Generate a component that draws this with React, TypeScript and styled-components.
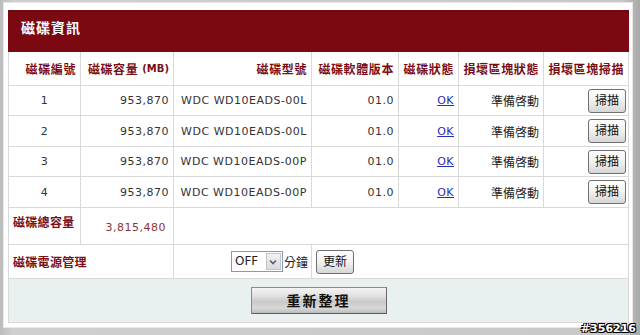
import React from "react";
import styled, { createGlobalStyle } from "styled-components";

const Global = createGlobalStyle`
  html, body { margin: 0; padding: 0; }
  body {
    width: 640px; height: 335px; overflow: hidden;
    background: linear-gradient(180deg, #d2d2d2 0%, #c2c2c2 60%, #b4b4b4 100%);
    font-family: "DejaVu Sans", "Noto Sans CJK TC", sans-serif;
  }
`;

const Frame = styled.div`
  position: relative;
  width: 640px;
  height: 335px;
  box-sizing: border-box;
  padding: 3px 8px 8px 4px;
  background: linear-gradient(90deg, #bcbcbc 0%, #cfcfcf 2%, #c8c8c8 97%, #a9a9a9 100%);
`;

const Panel = styled.div`
  background: #fff;
  padding: 7px 3px 4px 4px;
  box-shadow: 0 0 0 1px #e8e8e8;
`;

const TitleBar = styled.div`
  height: 42px;
  box-sizing: border-box;
  background: linear-gradient(180deg, #6e0610 0%, #7c0912 8%, #7c0912 100%);
  color: #fff;
  font-family: "Noto Sans CJK TC", sans-serif;
  font-weight: 700;
  font-size: 14px;
  letter-spacing: 1px;
  padding: 7px 0 0 13px;
`;

const Grid = styled.div`
  display: grid;
  grid-template-columns: 71px 92px 137px 86px 59px 84px 84px;
  grid-template-rows: 33px 29px 30px 29px 30px 36px 33px 43px;
  gap: 1px;
  background: #d9d9d9;
  border: 1px solid #d9d9d9;
  border-top: none;
`;

const Cell = styled.div<{ $align?: string; $span?: number; $valign?: string }>`
  background: #fff;
  display: flex;
  align-items: ${(p) => p.$valign || "center"};
  justify-content: ${(p) => p.$align || "flex-end"};
  padding: 0 4px;
  grid-column: span ${(p) => p.$span || 1};
  font-size: 11px;
  letter-spacing: 0.5px;
  color: #333;
  white-space: nowrap;
`;

const HeadCell = styled(Cell)`
  font-family: "Noto Sans CJK TC", sans-serif;
  font-weight: 700;
  font-size: 12px;
  letter-spacing: 0.6px;
  color: #7a0d15;
`;

const Unit = styled.span`
  font-family: "DejaVu Sans", sans-serif;
  font-size: 10px;
  letter-spacing: 0;
  margin-left: 4px;
`;

const Label = styled(Cell)`
  font-family: "Noto Sans CJK TC", sans-serif;
  font-weight: 700;
  font-size: 12px;
  letter-spacing: 0.3px;
  color: #7a0d15;
`;

const TotalValue = styled(Cell)`
  color: #8e3434;
  padding-right: 7px;
  padding-top: 2px;
`;

const CJK = styled.span`
  font-family: "Noto Sans CJK TC", sans-serif;
  font-size: 12px;
  letter-spacing: 0;
  color: #222;
`;

const Link = styled.a`
  color: #2a2ab8;
  text-decoration: underline;
  font-size: 11px;
  cursor: pointer;
`;

const SmallButton = styled.button`
  width: 38px;
  height: 24px;
  padding: 0 0 3px;
  border: 1px solid #6f6f6f;
  border-radius: 3px;
  background: linear-gradient(180deg, #ffffff 0%, #f1f1f1 50%, #d6d6d6 100%);
  font-family: "Noto Sans CJK TC", sans-serif;
  font-size: 12px;
  letter-spacing: 0;
  color: #111;
  margin-right: -2px;
`;

const SelectWrap = styled.div`
  display: flex;
  align-items: center;
  gap: 1px;
  margin-right: -1px;
`;

const SelectBox = styled.div`
  display: flex;
  height: 21px;
  border: 1px solid #7f9db9;
  background: #fff;
  box-sizing: border-box;
`;

const SelectText = styled.span`
  width: 30px;
  padding-left: 3px;
  font-size: 12px;
  letter-spacing: 0;
  color: #222;
  line-height: 19px;
`;

const SelectArrow = styled.span`
  width: 15px;
  margin: 1px;
  background: linear-gradient(180deg, #f4f4f4, #d8d8d8);
  display: flex;
  align-items: center;
  justify-content: center;
  box-shadow: inset 0 0 0 1px #c4c4c4;
`;

const Bottom = styled.div`
  grid-column: span 7;
  background: #e9f1f0;
  display: flex;
  justify-content: center;
  align-items: flex-start;
  padding-top: 8px;
`;

const BigButton = styled.button`
  width: 136px;
  height: 27px;
  border: 1px solid #8a8a8a;
  border-right-color: #6a6a6a;
  border-bottom-color: #5a5a5a;
  background: linear-gradient(180deg, #f4f4f4 0%, #e2e2e2 30%, #c9c9c9 55%, #d8d8d8 80%, #bdbdbd 100%);
  font-family: "Noto Sans CJK TC", sans-serif;
  font-weight: 700;
  font-size: 14px;
  letter-spacing: 2px;
  color: #111;
  padding: 0 0 2px;
`;

const Watermark = styled.div`
  position: absolute;
  right: 4px;
  bottom: 0;
  font-family: "DejaVu Sans", sans-serif;
  font-weight: 700;
  font-size: 11px;
  color: #fff;
  text-shadow: -1px -1px 0 #000, 1px -1px 0 #000, -1px 1px 0 #000, 1px 1px 0 #000;
`;

const rows = [
  { id: "1", model: "WDC WD10EADS-00L" },
  { id: "2", model: "WDC WD10EADS-00L" },
  { id: "3", model: "WDC WD10EADS-00P" },
  { id: "4", model: "WDC WD10EADS-00P" },
];

export default function App() {
  return (
    <>
      <Global />
      <Frame>
        <Panel>
          <TitleBar>磁碟資訊</TitleBar>
          <Grid>
            <HeadCell>磁碟編號</HeadCell>
            <HeadCell>
              磁碟容量<Unit>(MB)</Unit>
            </HeadCell>
            <HeadCell>磁碟型號</HeadCell>
            <HeadCell>磁碟軟體版本</HeadCell>
            <HeadCell>磁碟狀態</HeadCell>
            <HeadCell>損壞區塊狀態</HeadCell>
            <HeadCell>損壞區塊掃描</HeadCell>
            {rows.map((r) => (
              <React.Fragment key={r.id}>
                <Cell $align="center">{r.id}</Cell>
                <Cell>953,870</Cell>
                <Cell>{r.model}</Cell>
                <Cell>01.0</Cell>
                <Cell>
                  <Link>OK</Link>
                </Cell>
                <Cell>
                  <CJK>準備啓動</CJK>
                </Cell>
                <Cell>
                  <SmallButton>掃描</SmallButton>
                </Cell>
              </React.Fragment>
            ))}
            <Label $align="flex-start" $valign="flex-start" style={{ paddingTop: 5 }}>
              磁碟總容量
            </Label>
            <TotalValue>3,815,480</TotalValue>
            <Cell $span={5} />
            <Label $align="flex-start" $span={2}>
              磁碟電源管理
            </Label>
            <Cell>
              <SelectWrap>
                <SelectBox>
                  <SelectText>OFF</SelectText>
                  <SelectArrow>
                    <svg width="8" height="6" viewBox="0 0 8 6">
                      <path d="M1 1.5 L4 4.5 L7 1.5" fill="none" stroke="#4d6185" strokeWidth="1.6" />
                    </svg>
                  </SelectArrow>
                </SelectBox>
                <CJK>分鐘</CJK>
              </SelectWrap>
            </Cell>
            <Cell $align="flex-start" $span={4}>
              <SmallButton>更新</SmallButton>
            </Cell>
            <Bottom>
              <BigButton>重新整理</BigButton>
            </Bottom>
          </Grid>
        </Panel>
        <Watermark>#356216</Watermark>
      </Frame>
    </>
  );
}
